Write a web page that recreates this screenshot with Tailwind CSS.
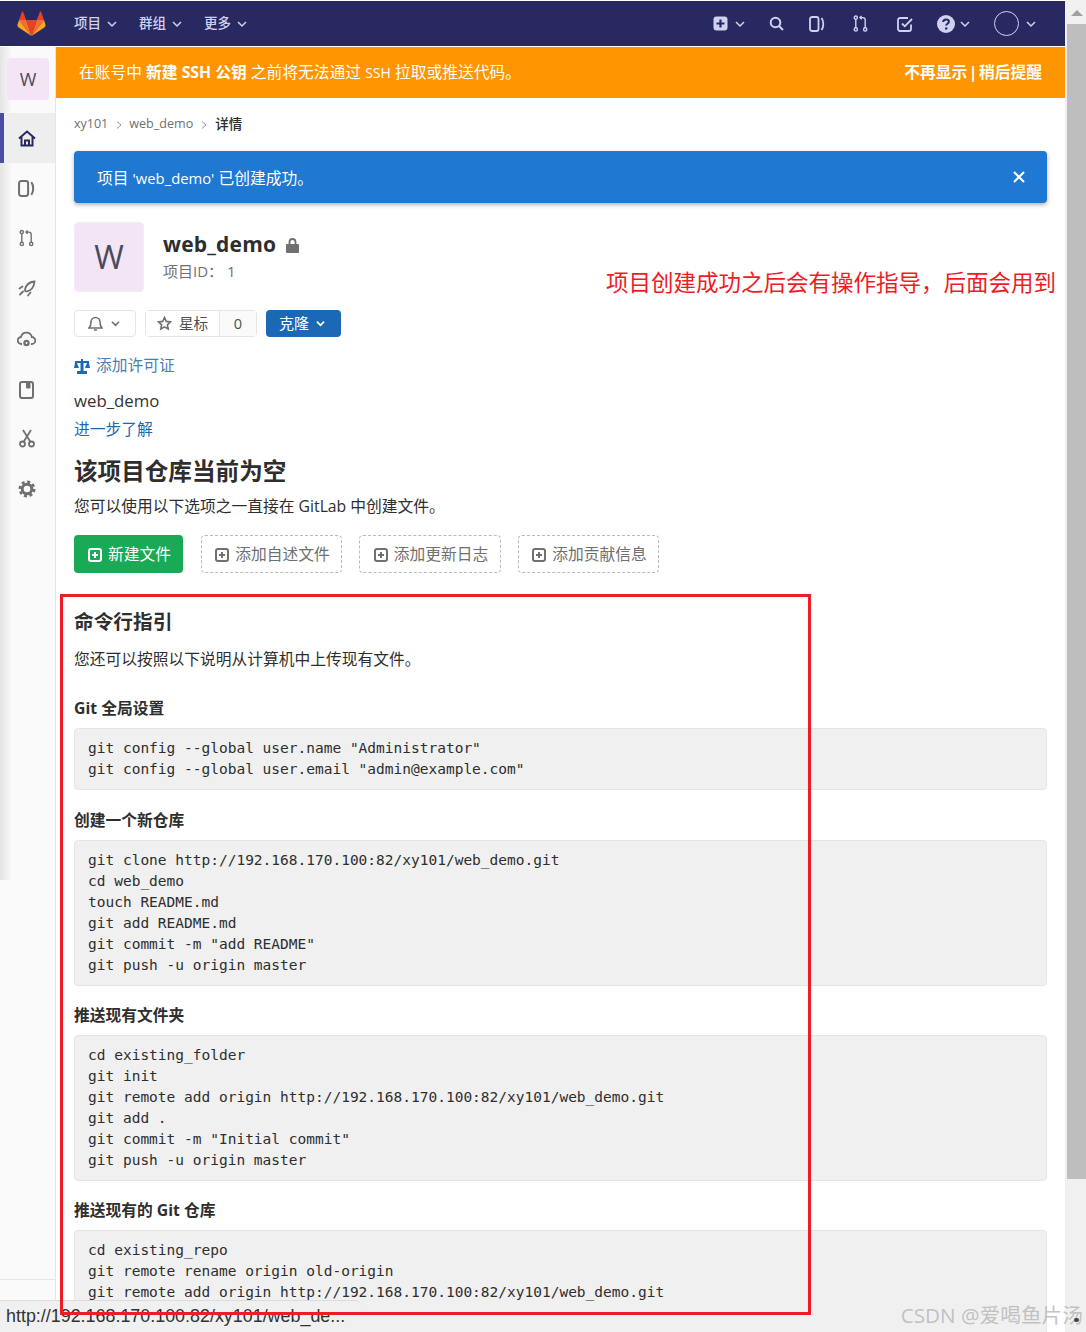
<!DOCTYPE html>
<html lang="zh-CN">
<head>
<meta charset="UTF-8" />
<title>web_demo</title>
<script src="https://cdn.jsdelivr.net/npm/@tailwindcss/browser@4"></script>
</head>
<body class="bg-white font-['Open_Sans','Noto_Sans_CJK_SC',sans-serif] text-[#2e2e2e] overflow-hidden">
<div class="relative h-[1332px] w-[1086px] overflow-hidden">
  <div class="flex h-[1332px]">
    <div class="w-[1065px] shrink-0 flex flex-col">
      <!-- Top nav -->
      <div class="mt-px h-[45px] bg-[#292961] flex items-center text-[#d1d1f0] text-[13.5px] font-medium shrink-0">
        <svg class="ml-[17px] w-[29px] h-[26px]" viewBox="0 0 29 26">
          <polygon points="14.5,25 9.2,9 19.8,9" fill="#e24329"/>
          <polygon points="14.5,25 9.2,9 2,9" fill="#fc6d26"/>
          <polygon points="2,9 0.4,14 1,16 14.5,25" fill="#fca326"/>
          <polygon points="2,9 9.2,9 6,0.6 5,0.6" fill="#e24329"/>
          <polygon points="14.5,25 19.8,9 27,9" fill="#fc6d26"/>
          <polygon points="27,9 28.6,14 28,16 14.5,25" fill="#fca326"/>
          <polygon points="27,9 19.8,9 23,0.6 24,0.6" fill="#e24329"/>
        </svg>
        <div class="ml-[28px] flex items-center gap-[6px]">项目<svg class="w-[10px] h-[10px]" viewBox="0 0 10 10" fill="none" stroke="currentColor" stroke-width="1.5"><path d="M1 3l4 4 4-4"/></svg></div>
        <div class="ml-[22px] flex items-center gap-[6px]">群组<svg class="w-[10px] h-[10px]" viewBox="0 0 10 10" fill="none" stroke="currentColor" stroke-width="1.5"><path d="M1 3l4 4 4-4"/></svg></div>
        <div class="ml-[22px] flex items-center gap-[6px]">更多<svg class="w-[10px] h-[10px]" viewBox="0 0 10 10" fill="none" stroke="currentColor" stroke-width="1.5"><path d="M1 3l4 4 4-4"/></svg></div>
        <div class="ml-auto flex items-center mr-[29px]">
          <svg class="w-[15px] h-[15px]" viewBox="0 0 15 15"><rect x="0.5" y="0.5" width="14" height="14" rx="3" fill="currentColor"/><path d="M7.5 3.5v8M3.5 7.5h8" stroke="#292961" stroke-width="2.2"/></svg>
          <svg class="ml-[7px] w-[10px] h-[10px]" viewBox="0 0 10 10" fill="none" stroke="currentColor" stroke-width="1.5"><path d="M1 3l4 4 4-4"/></svg>
          <svg class="ml-[24px] w-[15px] h-[15px]" viewBox="0 0 15 15" fill="none" stroke="currentColor" stroke-width="2"><circle cx="6.5" cy="6.5" r="4.8"/><path d="M10 10l4 4"/></svg>
          <svg class="ml-[25px] w-[16px] h-[16px]" viewBox="0 0 16 16" fill="none" stroke="currentColor" stroke-width="1.8"><rect x="1" y="1" width="8.5" height="14" rx="2"/><path d="M12.5 2c2.4 3 2.4 9 0 12"/></svg>
          <svg class="ml-[28px] w-[15px] h-[17px]" viewBox="0 0 15 17" fill="none" stroke="currentColor" stroke-width="1.4"><circle cx="2.8" cy="2.6" r="1.6"/><circle cx="2.8" cy="14.4" r="1.6"/><circle cx="12.2" cy="14.4" r="1.6"/><path d="M2.8 4.2v8.6M12.2 12.8V5c0-1.6-1-2.4-2.4-2.4H7M8.6 1L7 2.6l1.6 1.6"/></svg>
          <svg class="ml-[29px] w-[16px] h-[16px]" viewBox="0 0 16 16" fill="none" stroke="currentColor" stroke-width="1.8"><path d="M14 8.5V13a2 2 0 0 1-2 2H3a2 2 0 0 1-2-2V4a2 2 0 0 1 2-2h8"/><path d="M5 7.5l2.8 2.8L15 3"/></svg>
          <svg class="ml-[24px] w-[18px] h-[18px]" viewBox="0 0 18 18"><circle cx="9" cy="9" r="9" fill="currentColor"/><path d="M6.2 7c0-1.7 1.3-2.6 2.9-2.6s2.8.9 2.8 2.3c0 2-2.7 2-2.7 3.9" fill="none" stroke="#292961" stroke-width="2"/><circle cx="9.2" cy="13.5" r="1.2" fill="#292961"/></svg>
          <svg class="ml-[5px] w-[10px] h-[10px]" viewBox="0 0 10 10" fill="none" stroke="currentColor" stroke-width="1.5"><path d="M1 3l4 4 4-4"/></svg>
          <div class="ml-[24px] w-[25px] h-[25px] rounded-full border border-[#d1d1f0]"></div>
          <svg class="ml-[7px] w-[10px] h-[10px]" viewBox="0 0 10 10" fill="none" stroke="currentColor" stroke-width="1.5"><path d="M1 3l4 4 4-4"/></svg>
        </div>
      </div>

      <div class="flex flex-1 mt-px min-h-0">
        <!-- Sidebar -->
        <div class="w-[56px] shrink-0 border-r border-[#e5e5e5] bg-[#fafafa] flex flex-col items-stretch relative">
          <div class="absolute left-0 top-0 h-[833px] w-[12px] bg-gradient-to-r from-[#e4e4e4] to-[#fafafa]"></div>
          <div class="relative mt-[11px] ml-[7px] w-[42px] h-[42px] rounded bg-[#f3e5f5] flex items-center justify-center text-[18px] text-[#4a4a58] font-medium">W</div>
          <div class="relative mt-[13px] h-[50px] bg-[#eeeeee] border-l-[4px] border-[#4b4ba3] flex items-center justify-center pr-[6px]">
            <svg class="w-[18px] h-[17px]" viewBox="0 0 18 17" fill="none" stroke="#292961" stroke-width="2"><path d="M1 8.5L9 1.5l8 7M3.5 7v8.5h11V7"/><path d="M7 15.5v-5h4v5"/></svg>
          </div>
          <div class="relative flex flex-col items-center text-[#707070] pr-[2px]">
            <svg class="mt-[17px] w-[17px] h-[17px]" viewBox="0 0 16 16" fill="none" stroke="currentColor" stroke-width="1.9"><rect x="1" y="1" width="8.5" height="14" rx="2"/><path d="M12.5 2c2.4 3 2.4 9 0 12"/></svg>
            <svg class="mt-[32px] w-[15px] h-[18px]" viewBox="0 0 15 17" fill="none" stroke="currentColor" stroke-width="1.4"><circle cx="2.8" cy="2.6" r="1.6"/><circle cx="2.8" cy="14.4" r="1.6"/><circle cx="12.2" cy="14.4" r="1.6"/><path d="M2.8 4.2v8.6M12.2 12.8V5c0-1.6-1-2.4-2.4-2.4H7M8.6 1L7 2.6l1.6 1.6"/></svg>
            <svg class="mt-[33px] w-[18px] h-[17px]" viewBox="0 0 18 17" fill="none" stroke="currentColor" stroke-width="1.8" stroke-linecap="round"><path d="M16.5 1.500C11.500 2 8 5 7 9.500c-.3 1.500.5 2.200 2 1.800 4.500-1 7-4.500 7.500-9.800z"/><path d="M1.500 8.500l3-2M10 15.500l2.500-3M2 14.500l3-3"/></svg>
            <svg class="mt-[34px] w-[19px] h-[17px]" viewBox="0 0 19 17" fill="none" stroke="currentColor" stroke-width="1.8"><path d="M5 13H4.500a3.500 3.500 0 0 1-.5-7 5.500 5.500 0 0 1 10.800 0 3.500 3.500 0 0 1 0 7H14"/><circle cx="9.500" cy="12" r="2.600" fill="currentColor" stroke-width="1.200"/><circle cx="9.500" cy="12" r="1" fill="#fafafa" stroke="none"/></svg>
            <svg class="mt-[33px] w-[15px] h-[18px]" viewBox="0 0 15 18" fill="none" stroke="currentColor" stroke-width="2"><rect x="1" y="1" width="13" height="16" rx="2"/><path d="M7.500 1v6h3.500V1" fill="currentColor" stroke-width="1"/></svg>
            <svg class="mt-[30px] w-[16px] h-[19px]" viewBox="0 0 16 19" fill="none" stroke="currentColor" stroke-width="1.800"><circle cx="3.500" cy="15" r="2.500"/><circle cx="12.500" cy="15" r="2.500"/><path d="M4.500 13L12 1M11.500 13L4 1"/></svg>
            <svg class="mt-[32px] w-[18px] h-[18px]" viewBox="0 0 18 18" fill="none" stroke="currentColor"><circle cx="9" cy="9" r="4.800" stroke-width="3"/><circle cx="9" cy="9" r="7.200" stroke-width="2.600" stroke-dasharray="3 2.650"/></svg>
          </div>
          <div class="absolute left-0 right-0 top-[1232px] border-t border-[#e5e5e5]"></div>
        </div>

        <!-- Main -->
        <div class="flex-1 min-w-0">
          <div class="h-[51px] bg-[#ff9500] flex items-center justify-between pl-[23px] pr-[23px] text-white text-[15.75px]">
            <div>在账号中 <span class="font-bold">新建 SSH 公钥</span> 之前将无法通过 <span class="text-[14px]">SSH</span> 拉取或推送代码。</div>
            <div class="font-bold [word-spacing:-2.5px]">不再显示 | 稍后提醒</div>
          </div>
          <div class="pl-[18px] pr-[18px]">
            <div class="h-[53px] flex items-center text-[12.5px] text-[#707070]">
              <span>xy101</span>
              <svg class="ml-[8px] mr-[7px] w-[6px] h-[8px]" viewBox="0 0 6 8" fill="none" stroke="#909090" stroke-width="1"><path d="M1 .5L5 4 1 7.500"/></svg>
              <span class="text-[12.6px]">web_demo</span>
              <svg class="mx-[8px] w-[6px] h-[8px]" viewBox="0 0 6 8" fill="none" stroke="#909090" stroke-width="1"><path d="M1 .5L5 4 1 7.500"/></svg>
              <span class="text-[#2e2e2e] text-[13.5px] font-medium">详情</span>
            </div>
            <div class="h-[52px] rounded bg-[#1f78d1] shadow-[0_2px_4px_rgba(0,0,0,0.3)] text-white text-[15.75px] flex items-center justify-between pl-[23px] pr-[22px]">
              <span class="pt-[3px]">项目 <span class="text-[14.8px]">'web_demo'</span> 已创建成功。</span>
              <svg class="w-[12px] h-[12px]" viewBox="0 0 12 12" stroke="white" stroke-width="2.200"><path d="M1 1l10 10M11 1L1 11"/></svg>
            </div>
            <div class="mt-[19px] flex">
              <div class="w-[70px] h-[70px] rounded bg-[#f3e5f5] border border-[#f0eef4] flex items-center justify-center text-[32px] text-[#4a4a58]">W</div>
              <div class="ml-[19px] pt-[9px]">
                <div class="flex items-center h-[28px]">
                  <span class="text-[21px] font-bold tracking-[0.2px]">web_demo</span>
                  <svg class="ml-[10px] w-[13px] h-[15px]" viewBox="0 0 13 15" fill="#707070"><path d="M1 6h11a1 1 0 0 1 1 1v7a1 1 0 0 1-1 1H1a1 1 0 0 1-1-1V7a1 1 0 0 1 1-1z"/><path d="M3.500 6V4a3 3 0 0 1 6 0v2" fill="none" stroke="#707070" stroke-width="1.800"/></svg>
                </div>
                <div class="text-[15px] text-[#707070] mt-px">项目ID：&nbsp;1</div>
              </div>
            </div>
            <div class="mt-[18px] flex items-center text-[14.6px]">
              <div class="w-[62px] h-[27px] border border-[#e5e5e5] rounded flex items-center pl-[13px] gap-[8px] text-[#707070]">
                <svg class="w-[15px] h-[15px]" viewBox="0 0 15 15" fill="none" stroke="currentColor" stroke-width="1.600"><path d="M1 12h13c-1.500-1.500-2-3-2-6a4.500 4.500 0 0 0-9 0c0 3-.5 4.500-2 6zM6 14h3"/></svg>
                <svg class="w-[9px] h-[9px]" viewBox="0 0 10 10" fill="none" stroke="currentColor" stroke-width="1.800"><path d="M1 3l4 4 4-4"/></svg>
              </div>
              <div class="ml-[9px] h-[27px] w-[112px] border border-[#e5e5e5] rounded flex items-center">
                <div class="w-[74px] h-full border-r border-[#e5e5e5] flex items-center justify-center gap-[7px] bg-white">
                  <svg class="w-[15px] h-[15px]" viewBox="0 0 15 15" fill="#fff" stroke="#707070" stroke-width="1.600"><path d="M7.500 1.500l1.800 3.900 4.200.5-3.100 2.900.8 4.200-3.700-2.100-3.700 2.100.8-4.200-3.100-2.900 4.200-.5z"/></svg>
                  <span class="text-[#505050]">星标</span>
                </div>
                <div class="flex-1 h-full bg-[#fafafa] flex items-center justify-center text-[#505050]">0</div>
              </div>
              <div class="ml-[9px] h-[27px] w-[75px] rounded bg-[#1b69b6] text-white flex items-center justify-center gap-[7px] text-[15px] pr-[3px]">
                克隆
                <svg class="w-[9px] h-[9px]" viewBox="0 0 10 10" fill="none" stroke="currentColor" stroke-width="2"><path d="M1 3l4 4 4-4"/></svg>
              </div>
            </div>
            <div class="mt-[18px] h-[22px] flex items-center text-[15.75px] text-[#1b69b6]">
              <svg class="w-[16px] h-[15px]" viewBox="0 0 16 15" fill="#1b69b6"><path d="M7 0h2v2h6v2l1 5h-5l2-5h-3.500v8H13v3H3v-3h3.500V4H3l2 5H0l1-5V2h6z"/></svg>
              <span class="ml-[6px] text-[#4a7fb5]">添加许可证</span>
            </div>
            <div class="mt-[12px] h-[24px] flex items-center text-[16.8px] text-[#333]">web_demo</div>
            <div class="mt-[5px] h-[24px] flex items-center text-[15.75px] text-[#1b69b6]">进一步了解</div>
            <h2 class="mt-[13px] h-[34px] flex items-center text-[23.6px] font-bold">该项目仓库当前为空</h2>
            <p class="mt-[6px] h-[24px] flex items-center text-[15.75px] text-[#2e2e2e]">您可以使用以下选项之一直接在 GitLab 中创建文件。</p>
            <div class="mt-[16px] flex text-[15.75px]">
              <div class="w-[109px] h-[38px] rounded bg-[#1aaa55] text-white flex items-center justify-center gap-[6px] pl-[2px] pt-[2px]">
                <svg class="w-[14px] h-[14px]" viewBox="0 0 14 14"><rect x="1" y="1" width="12" height="12" rx="2" fill="none" stroke="white" stroke-width="2"/><path d="M7 4v6M4 7h6" stroke="white" stroke-width="2"/></svg>新建文件
              </div>
              <div class="ml-[18px] w-[141px] h-[38px] rounded border border-dashed border-[#bbb] text-[#707070] flex items-center justify-center gap-[6px] pl-[2px] pt-[2px]">
                <svg class="w-[14px] h-[14px]" viewBox="0 0 14 14"><rect x="1" y="1" width="12" height="12" rx="2" fill="none" stroke="#707070" stroke-width="2"/><path d="M7 4v6M4 7h6" stroke="#707070" stroke-width="2"/></svg>添加自述文件
              </div>
              <div class="ml-[17px] w-[142px] h-[38px] rounded border border-dashed border-[#bbb] text-[#707070] flex items-center justify-center gap-[6px] pl-[2px] pt-[2px]">
                <svg class="w-[14px] h-[14px]" viewBox="0 0 14 14"><rect x="1" y="1" width="12" height="12" rx="2" fill="none" stroke="#707070" stroke-width="2"/><path d="M7 4v6M4 7h6" stroke="#707070" stroke-width="2"/></svg>添加更新日志
              </div>
              <div class="ml-[17px] w-[141px] h-[38px] rounded border border-dashed border-[#bbb] text-[#707070] flex items-center justify-center gap-[6px] pl-[2px] pt-[2px]">
                <svg class="w-[14px] h-[14px]" viewBox="0 0 14 14"><rect x="1" y="1" width="12" height="12" rx="2" fill="none" stroke="#707070" stroke-width="2"/><path d="M7 4v6M4 7h6" stroke="#707070" stroke-width="2"/></svg>添加贡献信息
              </div>
            </div>
            <h4 class="mt-[35px] h-[28px] flex items-center text-[19.7px] font-bold">命令行指引</h4>
            <p class="mt-[12px] h-[24px] flex items-center text-[15.75px]">您还可以按照以下说明从计算机中上传现有文件。</p>
            <h5 class="mt-[27px] h-[20px] flex items-center text-[15.75px] font-bold">Git 全局设置</h5>
            <pre class="mt-[9px] h-[62px] px-[13px] py-[9px] rounded-sm bg-[#f0f0f0] border border-[#e5e5e5] font-['DejaVu_Sans_Mono',monospace] text-[14.500px] leading-[21px] text-[#2e2e2e]">git config --global user.name "Administrator"
git config --global user.email "admin@example.com"</pre>
            <h5 class="mt-[21px] h-[20px] flex items-center text-[15.75px] font-bold">创建一个新仓库</h5>
            <pre class="mt-[9px] h-[146px] px-[13px] py-[9px] rounded-sm bg-[#f0f0f0] border border-[#e5e5e5] font-['DejaVu_Sans_Mono',monospace] text-[14.500px] leading-[21px] text-[#2e2e2e]">git clone http://192.168.170.100:82/xy101/web_demo.git
cd web_demo
touch README.md
git add README.md
git commit -m "add README"
git push -u origin master</pre>
            <h5 class="mt-[20px] h-[20px] flex items-center text-[15.75px] font-bold">推送现有文件夹</h5>
            <pre class="mt-[9px] h-[146px] px-[13px] py-[9px] rounded-sm bg-[#f0f0f0] border border-[#e5e5e5] font-['DejaVu_Sans_Mono',monospace] text-[14.500px] leading-[21px] text-[#2e2e2e]">cd existing_folder
git init
git remote add origin http://192.168.170.100:82/xy101/web_demo.git
git add .
git commit -m "Initial commit"
git push -u origin master</pre>
            <h5 class="mt-[20px] h-[20px] flex items-center text-[15.75px] font-bold">推送现有的 Git 仓库</h5>
            <pre class="mt-[9px] h-[146px] px-[13px] py-[9px] rounded-sm bg-[#f0f0f0] border border-[#e5e5e5] font-['DejaVu_Sans_Mono',monospace] text-[14.500px] leading-[21px] text-[#2e2e2e]">cd existing_repo
git remote rename origin old-origin
git remote add origin http://192.168.170.100:82/xy101/web_demo.git</pre>
          </div>
        </div>
      </div>
    </div>
    <!-- Scrollbar -->
    <div class="w-[21px] shrink-0 bg-[#f0f0f0] flex flex-col pl-[2px]">
      <div class="h-[24px] flex items-center justify-center pt-[1px]"><div class="w-0 h-0 border-x-[6px] border-x-transparent border-b-[6px] border-b-[#a0a0a0]"></div></div>
      <div class="h-[1155px] bg-[#bebebe]"></div>
    </div>
  </div>

  <!-- Annotations over the screenshot -->
  <div class="absolute left-[606px] top-[268px] text-[22.500px] leading-[30px] text-[#ee1c25] whitespace-nowrap">项目创建成功之后会有操作指导，后面会用到</div>
  <div class="absolute left-0 bottom-0 w-[361px] h-[32px] bg-[#f0f0f0] border-t border-[#dcdcdc] rounded-tr-md pl-[6px] text-[17.9px] leading-[31px] text-[#333] font-['Liberation_Sans',sans-serif]">http://192.168.170.100:82/xy101/web_de...</div>
  <div class="absolute left-[60px] top-[594px] w-[751px] h-[721px] border-[3px] border-[#ee1c25]"></div>
  <div class="absolute right-[3px] top-[1303px] text-[20.7px] leading-[24px] text-[#b5b5b5]/80 whitespace-nowrap">CSDN @爱喝鱼片汤</div>
  <div class="absolute left-[1074px] top-[1318px] w-[5px] h-[4px] bg-[#444] rounded-sm"></div>
</div>
</body>
</html>
